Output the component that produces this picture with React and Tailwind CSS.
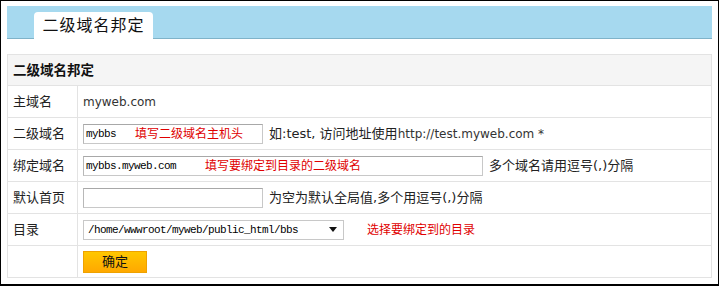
import React from 'react';

const cjk = { fontFamily: '"DejaVu Sans", "Noto Sans CJK SC", sans-serif' };
const mono = { fontFamily: '"Liberation Mono", "Noto Sans CJK SC", monospace' };

const Row = ({ label, children }) => (
  <tr className="h-[32px]">
    <td className="w-[70px] border border-[#e3e3e3] pl-[5px] text-[13px] text-[#222]">{label}</td>
    <td className="border border-[#e3e3e3] pl-[5px] text-[13px] text-[#222]">{children}</td>
  </tr>
);

const Input = ({ width, value, hint, hintLeft }) => (
  <div className="relative inline-block align-middle">
    <div
      className="h-[20px] border border-[#c8c8c8] border-t-[#a8a8a8] border-l-[#b8b8b8] bg-white pl-[2px] text-[11px] leading-[18px] tracking-[-0.6px] text-black"
      style={{ ...mono, width }}
    >
      {value}
    </div>
    {hint && (
      <span className="absolute top-[1px] text-[12px] leading-[18px] text-[#e00000] whitespace-nowrap" style={{ left: hintLeft }}>
        {hint}
      </span>
    )}
  </div>
);

export default function App() {
  return (
    <div className="w-[719px] h-[287px] bg-white" style={cjk}>
      <div className="h-[286px] border border-b-2 border-black px-[6px] pt-[5px]">
        {/* blue tab bar */}
        <div className="h-[33px] bg-[#a6d9ef] border-b border-[#7fb3c9] flex items-end pl-[27px]">
          <div className="w-[119px] h-[27px] -mb-[1px] bg-white rounded-t-[4px] flex items-center justify-center text-[16px] tracking-[1px] text-[#111]">
            二级域名邦定
          </div>
        </div>

        <table className="mt-[15px] w-full border-collapse">
          <tbody>
            <tr className="h-[31px] bg-[#f5f5f5]">
              <td colSpan={2} className="border border-[#e3e3e3] pl-[5px] text-[13.5px] font-bold text-[#111]">
                二级域名邦定
              </td>
            </tr>
            <Row label="主域名">
              <span className="text-[12px] text-[#333]">myweb.com</span>
            </Row>
            <Row label="二级域名">
              <Input width={180} value="mybbs" hint="填写二级域名主机头" hintLeft={52} />
              <span className="ml-[6px] align-middle">
                如:test, 访问地址使用<span className="text-[12px] text-[#333]">http://test.myweb.com *</span>
              </span>
            </Row>
            <Row label="绑定域名">
              <Input width={400} value="mybbs.myweb.com" hint="填写要绑定到目录的二级域名" hintLeft={122} />
              <span className="ml-[6px] align-middle">多个域名请用逗号(,)分隔</span>
            </Row>
            <Row label="默认首页">
              <Input width={180} value="" />
              <span className="ml-[6px] align-middle">为空为默认全局值,多个用逗号(,)分隔</span>
            </Row>
            <Row label="目录">
              <div className="inline-flex items-center align-middle">
                <div
                  className="w-[261px] h-[20px] border border-[#c8c8c8] bg-white flex items-center justify-between pl-[4px] pr-[6px] text-[11px] tracking-[-0.6px] text-black"
                  style={mono}
                >
                  <span>/home/wwwroot/myweb/public_html/bbs</span>
                  <svg width="8" height="5" viewBox="0 0 8 5">
                    <path d="M0 0 L8 0 L4 5 Z" fill="#111" />
                  </svg>
                </div>
                <span className="ml-[23px] text-[12px] text-[#e00000]">选择要绑定到的目录</span>
              </div>
            </Row>
            <Row label="">
              <button className="w-[64px] h-[22px] border border-[#eea200] bg-gradient-to-b from-[#ffc700] to-[#ffa800] text-[13px] text-[#111]">
                确定
              </button>
            </Row>
          </tbody>
        </table>
      </div>
    </div>
  );
}
